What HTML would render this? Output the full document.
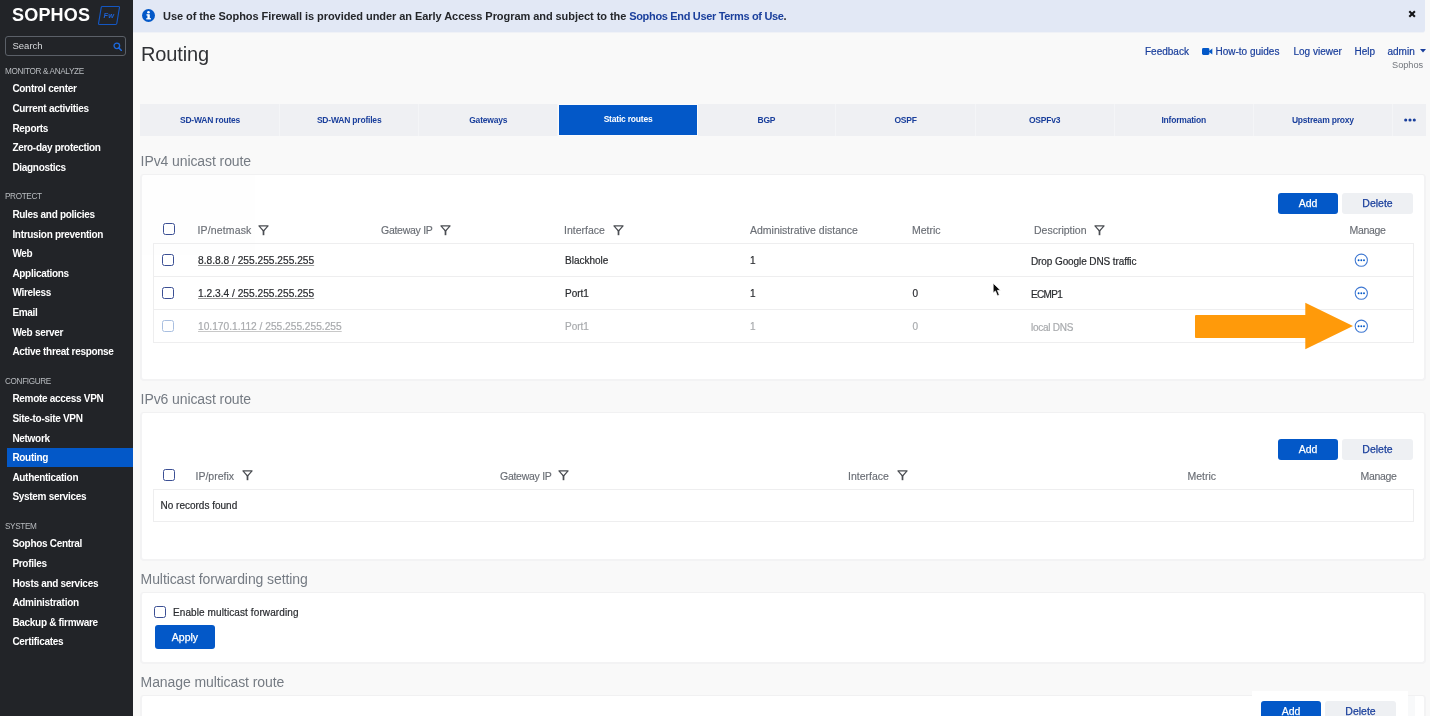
<!DOCTYPE html>
<html><head><meta charset="utf-8"><title>Routing</title>
<style>
*{box-sizing:border-box;margin:0;padding:0}
html,body{width:1430px;height:716px;overflow:hidden;background:#f9f9f9;font-family:"Liberation Sans",sans-serif;}
body{position:relative;will-change:transform;opacity:0.9999}
.abs{position:absolute;white-space:nowrap}
#side{position:absolute;left:0;top:0;width:133px;height:716px;background:#222428;color:#fff}
#side .sec{position:absolute;top:0;left:5px;font-size:8.2px;color:#b9bcc0;letter-spacing:-0.35px;line-height:10px;white-space:nowrap}
#side .it{position:absolute;top:0;left:12.4px;font-size:10px;font-weight:bold;color:#fff;line-height:12px;white-space:nowrap;letter-spacing:-0.3px}
#side .act{position:absolute;left:7px;top:448px;width:126px;height:19.4px;background:#0358c8}
#banner{position:absolute;left:133px;top:0;width:1292px;height:33px;background:#e2e8f5;border-bottom:1px solid #f0f2f7;border-bottom-right-radius:3px}
.link{color:#1a3f9c}
.sech{position:absolute;left:140.6px;font-size:14px;letter-spacing:-0.09px;color:#757b83;line-height:18px;white-space:nowrap}
.card{position:absolute;left:140px;width:1286px;background:#fff;border:solid #f3f3f4;border-width:1px 2px 2px 2px;border-top-color:#f1f1f2;border-radius:4px}
.btn{position:absolute;height:21px;border-radius:3px;font-size:10.5px;-webkit-text-stroke:0.25px;text-align:center;line-height:21px}
.btn.p{background:#0358c8;color:#fff}
.btn.s{background:#eef0f3;color:#1a3f9c}
.th{transform:translateY(0.55px);position:absolute;font-size:10.5px;-webkit-text-stroke:0.15px #6a6e75;color:#6a6e75;line-height:12px;white-space:nowrap}
.td{position:absolute;font-size:10px;-webkit-text-stroke:0.2px;color:#2a2c30;line-height:12px;white-space:nowrap}
.td.dim{color:#a9abae}
.cb{position:absolute;width:12px;height:12px;border:1.5px solid #3b4f94;border-radius:2.5px;background:#fff}
.cb.dim{border-color:#a9bfe0}
.tbl{position:absolute;left:153px;width:1261px;border:1px solid #eeeeef;background:#fff}
.hl{position:absolute;left:153px;width:1261px;height:1px;background:#eeeeef}

.tl{font-size:10px;line-height:12px;margin-top:0.6px;color:#1a3f9c;-webkit-text-stroke:0.2px #1a3f9c}
#tabs{position:absolute;left:140px;top:104px;width:1286px;height:31.7px;background:#eff0f3}
.tab{position:absolute;top:0;height:31.7px;width:139.1px;text-align:center;font-size:8.5px;letter-spacing:-0.2px;font-weight:bold;color:#1a3f9c;line-height:32px;border-right:1px solid #f4f5f7;white-space:nowrap}
.tab.on{background:#0358c8;color:#fff;line-height:28px;top:1px;height:29.8px;border:none;outline:1px solid #fbfbfc;width:138.6px;margin-left:0.5px}

.td.u{font-size:10.2px;text-decoration:underline;text-decoration-thickness:0.5px;text-underline-offset:0.8px;text-decoration-color:#9a9a9a}.td.u.dim{text-decoration-color:#c8c8c8}
.flt{margin-left:-0.4px;margin-top:-0.4px}
</style></head><body>
<div id="side">
<div class="abs" id="logo" style="left:12px;top:5px;font-size:18px;line-height:21px;font-weight:bold;color:#fff;letter-spacing:0.2px">SOPHOS</div>
<svg class="abs" style="left:97px;top:5px" width="24" height="21" viewBox="0 0 25 21" preserveAspectRatio="none"><path d="M5.6 1.5H22.6Q23.6 1.5 23.4 2.5L20.6 18.5Q20.4 19.5 19.4 19.5H2.4Q1.4 19.5 1.6 18.5L4.4 2.5Q4.6 1.5 5.6 1.5Z" fill="none" stroke="#1457c2" stroke-width="1.2"/><text x="12.3" y="13.4" font-family="Liberation Sans, sans-serif" font-size="7.8" font-style="italic" font-weight="bold" fill="#1d62d4" text-anchor="middle">Fw</text></svg>
<div class="abs" style="left:5px;top:36px;width:121px;height:20px;border:1px solid #5b6068;border-radius:3px"></div>
<div class="abs" style="left:12.5px;top:39.8px;font-size:9.5px;line-height:12px;color:#d8dadd">Search</div>
<svg class="abs" style="left:112.6px;top:41.8px" width="9.6" height="9.6" viewBox="0 0 11 11"><circle cx="4.4" cy="4.4" r="3.2" fill="none" stroke="#1d6ae0" stroke-width="1.5"/><path d="M6.8 6.8L10 10" stroke="#1d6ae0" stroke-width="1.8" stroke-linecap="round"/></svg>
<div class="sec" style="transform:translateY(66.8px)">MONITOR &amp; ANALYZE</div>
<div class="it" style="transform:translateY(82.7px)">Control center</div>
<div class="it" style="transform:translateY(102.7px)">Current activities</div>
<div class="it" style="transform:translateY(122.7px)">Reports</div>
<div class="it" style="transform:translateY(141.7px)">Zero-day protection</div>
<div class="it" style="transform:translateY(161.7px)">Diagnostics</div>
<div class="sec" style="transform:translateY(192.2px)">PROTECT</div>
<div class="it" style="transform:translateY(208.7px)">Rules and policies</div>
<div class="it" style="transform:translateY(228.7px)">Intrusion prevention</div>
<div class="it" style="transform:translateY(247.7px)">Web</div>
<div class="it" style="transform:translateY(267.7px)">Applications</div>
<div class="it" style="transform:translateY(286.7px)">Wireless</div>
<div class="it" style="transform:translateY(306.7px)">Email</div>
<div class="it" style="transform:translateY(326.7px)">Web server</div>
<div class="it" style="transform:translateY(345.7px)">Active threat response</div>
<div class="sec" style="transform:translateY(376.6px)">CONFIGURE</div>
<div class="it" style="transform:translateY(392.7px)">Remote access VPN</div>
<div class="it" style="transform:translateY(412.7px)">Site-to-site VPN</div>
<div class="it" style="transform:translateY(432.7px)">Network</div>
<div class="act"></div>
<div class="it" style="transform:translateY(451.7px)">Routing</div>
<div class="it" style="transform:translateY(471.7px)">Authentication</div>
<div class="it" style="transform:translateY(490.7px)">System services</div>
<div class="sec" style="transform:translateY(521.7px)">SYSTEM</div>
<div class="it" style="transform:translateY(537.7px)">Sophos Central</div>
<div class="it" style="transform:translateY(557.7px)">Profiles</div>
<div class="it" style="transform:translateY(577.7px)">Hosts and services</div>
<div class="it" style="transform:translateY(596.7px)">Administration</div>
<div class="it" style="transform:translateY(616.7px)">Backup &amp; firmware</div>
<div class="it" style="transform:translateY(635.7px)">Certificates</div>
</div>

<div id="banner"></div>
<svg class="abs" style="left:142px;top:9px" width="13" height="13" viewBox="0 0 13 13"><circle cx="6.5" cy="6.5" r="6.5" fill="#0358c8"/><rect x="5.4" y="5.3" width="2.4" height="4.8" fill="#fff"/><rect x="4.4" y="5.3" width="2" height="1.2" fill="#fff"/><rect x="4.2" y="9.2" width="4.8" height="1.2" fill="#fff"/><circle cx="6.5" cy="3.2" r="1.3" fill="#fff"/></svg>
<div class="abs" id="bt" style="left:163px;top:8px;transform:translateY(0.5px);font-size:11px;line-height:15px;color:#24262a;font-weight:bold;letter-spacing:-0.06px">Use of the Sophos Firewall is provided under an Early Access Program and subject to the <span class="link" style="letter-spacing:-0.33px">Sophos End User Terms of Use</span>.</div>
<svg class="abs" style="left:1407.5px;top:9.5px" width="8" height="8" viewBox="0 0 8 8"><path d="M1.3 1.3L6.9 6.7M6.9 1.3L1.3 6.7" stroke="#121316" stroke-width="2.1" stroke-linecap="butt"/></svg>
<div class="abs" id="title" style="left:141px;top:41.3px;font-size:20px;letter-spacing:-0.15px;line-height:26px;color:#303236">Routing</div>
<div class="abs tl" style="left:1145px;top:45px">Feedback</div>
<svg class="abs" style="left:1201.5px;top:47.6px" width="11" height="7" viewBox="0 0 11 7"><rect x="0" y="0" width="7.4" height="7" rx="1.4" fill="#0358c8"/><path d="M6.5 3.5 L10.3 0.6 V6.4 Z" fill="#0358c8"/></svg>
<div class="abs tl" style="left:1215.5px;top:45px">How-to guides</div>
<div class="abs tl" style="left:1293.5px;top:45px">Log viewer</div>
<div class="abs tl" style="left:1354.5px;top:45px">Help</div>
<div class="abs tl" style="left:1387.5px;top:45px">admin</div>
<svg class="abs" style="left:1419.5px;top:49.4px" width="6" height="3.5" viewBox="0 0 7 4"><path d="M0 0H7L3.5 4Z" fill="#1a3f9c"/></svg>
<div class="abs" style="left:1392px;top:59px;font-size:9.2px;line-height:12px;color:#72767c">Sophos</div>
<div id="tabs">
<div class="tab" style="left:1px">SD-WAN routes</div>
<div class="tab" style="left:140.1px">SD-WAN profiles</div>
<div class="tab" style="left:279.2px">Gateways</div>
<div class="tab on" style="left:418.3px">Static routes</div>
<div class="tab" style="left:557.4px">BGP</div>
<div class="tab" style="left:696.5px">OSPF</div>
<div class="tab" style="left:835.6px">OSPFv3</div>
<div class="tab" style="left:974.7px">Information</div>
<div class="tab" style="left:1113.8px">Upstream proxy</div>
<svg class="abs" style="left:1263.5px;top:13.8px" width="12" height="4" viewBox="0 0 12 4"><circle cx="1.7" cy="2" r="1.55" fill="#1a3f9c"/><circle cx="6" cy="2" r="1.55" fill="#1a3f9c"/><circle cx="10.3" cy="2" r="1.55" fill="#1a3f9c"/></svg>
</div>


<div class="sech" style="top:152.3px">IPv4 unicast route</div>
<div class="card" style="top:174px;height:207px"></div>
<div class="btn p" style="left:1278px;top:193.3px;width:60px">Add</div>
<div class="btn s" style="left:1342px;top:193.3px;width:71px">Delete</div>
<div class="cb" style="left:163px;top:223px"></div>
<div class="th" style="left:197.5px;top:223px;letter-spacing:0.15px">IP/netmask</div><svg class="abs flt" style="left:258.5px;top:225.5px" width="11" height="11" viewBox="0 0 11 11"><path d="M0.9 0.9H10.1L5.5 6Z" fill="none" stroke="#4a4d52" stroke-width="1.15" stroke-linejoin="round"/><rect x="4.65" y="5" width="1.7" height="5.2" fill="#4a4d52"/></svg>
<div class="th" style="left:381px;top:223px;letter-spacing:-0.27px">Gateway IP</div><svg class="abs flt" style="left:440px;top:225.5px" width="11" height="11" viewBox="0 0 11 11"><path d="M0.9 0.9H10.1L5.5 6Z" fill="none" stroke="#4a4d52" stroke-width="1.15" stroke-linejoin="round"/><rect x="4.65" y="5" width="1.7" height="5.2" fill="#4a4d52"/></svg>
<div class="th" style="left:564px;top:223px">Interface</div><svg class="abs flt" style="left:613px;top:225.5px" width="11" height="11" viewBox="0 0 11 11"><path d="M0.9 0.9H10.1L5.5 6Z" fill="none" stroke="#4a4d52" stroke-width="1.15" stroke-linejoin="round"/><rect x="4.65" y="5" width="1.7" height="5.2" fill="#4a4d52"/></svg>
<div class="th" style="left:750px;top:223px">Administrative distance</div>
<div class="th" style="left:912px;top:223px">Metric</div>
<div class="th" style="left:1034px;top:223px">Description</div><svg class="abs flt" style="left:1094px;top:225.5px" width="11" height="11" viewBox="0 0 11 11"><path d="M0.9 0.9H10.1L5.5 6Z" fill="none" stroke="#4a4d52" stroke-width="1.15" stroke-linejoin="round"/><rect x="4.65" y="5" width="1.7" height="5.2" fill="#4a4d52"/></svg>
<div class="th" style="left:1349.5px;top:223px;letter-spacing:-0.3px">Manage</div>
<div class="tbl" style="top:243px;height:100px"></div>
<div class="hl" style="top:276px"></div>
<div class="hl" style="top:309px"></div>
<div class="cb" style="left:162px;top:253.5px"></div>
<div class="cb" style="left:162px;top:286.5px"></div>
<div class="cb dim" style="left:162px;top:319.5px"></div>
<div class="td u" style="left:198px;top:254.5px">8.8.8.8 / 255.255.255.255</div>
<div class="td u" style="left:198px;top:287.5px">1.2.3.4 / 255.255.255.255</div>
<div class="td u dim" style="left:198px;top:320.5px">10.170.1.112 / 255.255.255.255</div>
<div class="td" style="left:565px;top:254.5px">Blackhole</div>
<div class="td" style="left:565px;top:287.5px">Port1</div>
<div class="td dim" style="left:565px;top:320.5px">Port1</div>
<div class="td" style="left:750px;top:254.5px">1</div>
<div class="td" style="left:750px;top:287.5px">1</div>
<div class="td dim" style="left:750px;top:320.5px">1</div>
<div class="td" style="left:912.5px;top:287.5px">0</div>
<div class="td dim" style="left:912.5px;top:320.5px">0</div>
<div class="td" style="letter-spacing:-0.1px;left:1031px;top:255.6px">Drop Google DNS traffic</div>
<div class="td" style="letter-spacing:-0.66px;left:1031px;top:288.6px">ECMP1</div>
<div class="td dim" style="letter-spacing:-0.25px;left:1031px;top:321.6px">local DNS</div>
<svg class="abs" style="left:1354px;top:253.4px" width="14" height="14" viewBox="0 0 14 14"><circle cx="7.3" cy="7.2" r="6.1" fill="#fff" stroke="#3f78d2" stroke-width="1.05"/><circle cx="4.6" cy="7.2" r="0.95" fill="#0358c8"/><circle cx="7.3" cy="7.2" r="0.95" fill="#0358c8"/><circle cx="10" cy="7.2" r="0.95" fill="#0358c8"/></svg><svg class="abs" style="left:1354px;top:286.4px" width="14" height="14" viewBox="0 0 14 14"><circle cx="7.3" cy="7.2" r="6.1" fill="#fff" stroke="#3f78d2" stroke-width="1.05"/><circle cx="4.6" cy="7.2" r="0.95" fill="#0358c8"/><circle cx="7.3" cy="7.2" r="0.95" fill="#0358c8"/><circle cx="10" cy="7.2" r="0.95" fill="#0358c8"/></svg><svg class="abs" style="left:1354px;top:319.4px" width="14" height="14" viewBox="0 0 14 14"><circle cx="7.3" cy="7.2" r="6.1" fill="#fff" stroke="#3f78d2" stroke-width="1.05"/><circle cx="4.6" cy="7.2" r="0.95" fill="#0358c8"/><circle cx="7.3" cy="7.2" r="0.95" fill="#0358c8"/><circle cx="10" cy="7.2" r="0.95" fill="#0358c8"/></svg>
<svg class="abs" style="left:1195px;top:302px" width="160" height="48" viewBox="0 0 160 48"><path d="M1 13H110.3V0.7L158 24L110.3 47.2V36H1Q0 36 0 35V14Q0 13 1 13Z" fill="#ff9a0a"/></svg>
<svg class="abs" style="left:992px;top:282.4px" width="10.6" height="16.5" viewBox="0 0 9 14"><path d="M1 1V9.3L2.9 7.6L4.6 11.7L6.2 11L4.6 7.1L7.1 6.9Z" fill="#0a0a0a" stroke="#fff" stroke-width="0.6" stroke-linejoin="round"/></svg>

<div class="sech" style="top:390.3px">IPv6 unicast route</div>
<div class="card" style="top:412px;height:149px"></div>
<div class="btn p" style="left:1278px;top:439px;width:60px">Add</div>
<div class="btn s" style="left:1342px;top:439px;width:71px">Delete</div>
<div class="cb" style="left:163px;top:469px"></div>
<div class="th" style="left:195.5px;top:469.2px">IP/prefix</div><svg class="abs flt" style="left:242px;top:470.5px" width="11" height="11" viewBox="0 0 11 11"><path d="M0.9 0.9H10.1L5.5 6Z" fill="none" stroke="#4a4d52" stroke-width="1.15" stroke-linejoin="round"/><rect x="4.65" y="5" width="1.7" height="5.2" fill="#4a4d52"/></svg>
<div class="th" style="left:500px;top:469.2px;letter-spacing:-0.27px">Gateway IP</div><svg class="abs flt" style="left:558.5px;top:470.5px" width="11" height="11" viewBox="0 0 11 11"><path d="M0.9 0.9H10.1L5.5 6Z" fill="none" stroke="#4a4d52" stroke-width="1.15" stroke-linejoin="round"/><rect x="4.65" y="5" width="1.7" height="5.2" fill="#4a4d52"/></svg>
<div class="th" style="left:848px;top:469.2px">Interface</div><svg class="abs flt" style="left:897px;top:470.5px" width="11" height="11" viewBox="0 0 11 11"><path d="M0.9 0.9H10.1L5.5 6Z" fill="none" stroke="#4a4d52" stroke-width="1.15" stroke-linejoin="round"/><rect x="4.65" y="5" width="1.7" height="5.2" fill="#4a4d52"/></svg>
<div class="th" style="left:1187.5px;top:469.2px">Metric</div>
<div class="th" style="left:1360.5px;top:469.2px;letter-spacing:-0.3px">Manage</div>
<div class="tbl" style="top:489px;height:33px"></div>
<div class="td" style="left:160.5px;top:500px">No records found</div>

<div class="sech" style="top:570.1px">Multicast forwarding setting</div>
<div class="card" style="top:592px;height:72px"></div>
<div class="cb" style="left:154px;top:606px"></div>
<div class="td" style="left:173px;top:607px;letter-spacing:0.1px">Enable multicast forwarding</div>
<div class="btn p" style="left:155px;top:625px;width:60px;height:24px;line-height:24px">Apply</div>

<div class="sech" style="top:673.4px">Manage multicast route</div>
<div class="card" style="top:695px;height:40px"></div>
<div class="abs" style="left:1252px;top:691px;width:156px;height:30px;background:#fff"></div>
<div class="abs" style="left:1408px;top:696px;width:7px;height:30px;background:#f8f9fa"></div>
<div class="btn p" style="left:1261px;top:701px;width:60px">Add</div>
<div class="btn s" style="left:1325px;top:701px;width:71px">Delete</div>
</body></html>
